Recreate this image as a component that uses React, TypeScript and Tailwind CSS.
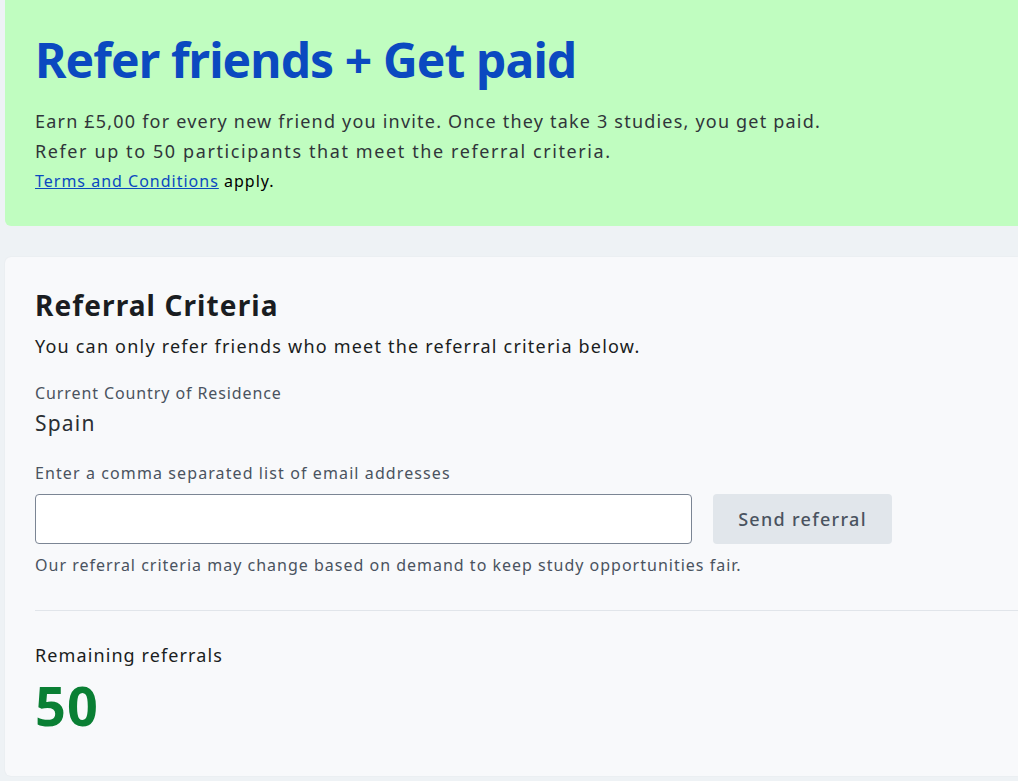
export default function App() {
  return (
    <div
      className="min-h-[781px] w-full overflow-hidden bg-[#eef2f5] pb-[5px] pl-[5px] text-[#1f2328]"
      style={{ fontFamily: "'Noto Sans', sans-serif" }}
    >
      {/* Banner */}
      <section className="rounded-bl-md bg-[#c0fdc0] pt-[30px] pb-[30px] pl-[30px]">
        <h1 className="text-[48px] font-bold leading-[60px] tracking-[-0.9px] text-[#0b49c0]">
          Refer friends + Get paid
        </h1>
        <div className="mt-[16px] text-[18px] leading-[30px] text-[#30353a]">
          <p className="tracking-[1.2px]">
            Earn £5,00 for every new friend you invite. Once they take 3 studies, you get paid.
          </p>
          <p className="tracking-[1.6px]">Refer up to 50 participants that meet the referral criteria.</p>
          <p className="text-[16px] tracking-[1px] text-black">
            <a href="#" className="text-[#0b49c0] underline">
              Terms and Conditions
            </a>{" "}
            apply.
          </p>
        </div>
      </section>

      {/* Criteria card */}
      <section className="mt-[31px] rounded-l-md bg-[#f8f9fb] pt-[28px] pb-[43px] pl-[30px] shadow-[0_0_2px_rgba(0,0,0,0.06)]">
        <h2 className="text-[28px] font-bold leading-[40px] tracking-[1.1px] text-[#1a1d21]">Referral Criteria</h2>
        <p className="mt-[9px] text-[18px] leading-[24px] tracking-[1.2px] text-[#1a1d21]">
          You can only refer friends who meet the referral criteria below.
        </p>

        <div className="mt-[24px] text-[16px] leading-[22px] tracking-[0.9px] text-[#4a5360]">
          Current Country of Residence
        </div>
        <div className="mt-[6px] text-[21px] leading-[26px] tracking-[1.2px] text-[#2b2f33]">Spain</div>

        <label className="mt-[26px] block text-[16px] leading-[22px] tracking-[1.1px] text-[#4a5360]">
          Enter a comma separated list of email addresses
        </label>
        <div className="mt-[10px] flex items-center gap-[21px]">
          <input
            type="text"
            className="h-[50px] w-[657px] rounded-[4px] border border-[#7b8594] bg-white px-3 text-[16px] outline-none"
          />
          <button className="h-[50px] w-[179px] rounded-[4px] bg-[#e1e6eb] text-[18px] font-medium tracking-[1.3px] text-[#4a5360]">
            Send referral
          </button>
        </div>
        <p className="mt-[10px] text-[16px] leading-[22px] tracking-[1px] text-[#4a5360]">
          Our referral criteria may change based on demand to keep study opportunities fair.
        </p>

        <div className="mt-[34px] border-t border-[#e1e5ea]" />

        <div className="mt-[32px] text-[18px] leading-[24px] tracking-[1.1px] text-[#1a1d21]">
          Remaining referrals
        </div>
        <div className="mt-[10px] text-[54px] font-bold leading-[56px] tracking-[1px] text-[#0a7f34]">50</div>
      </section>
    </div>
  );
}
